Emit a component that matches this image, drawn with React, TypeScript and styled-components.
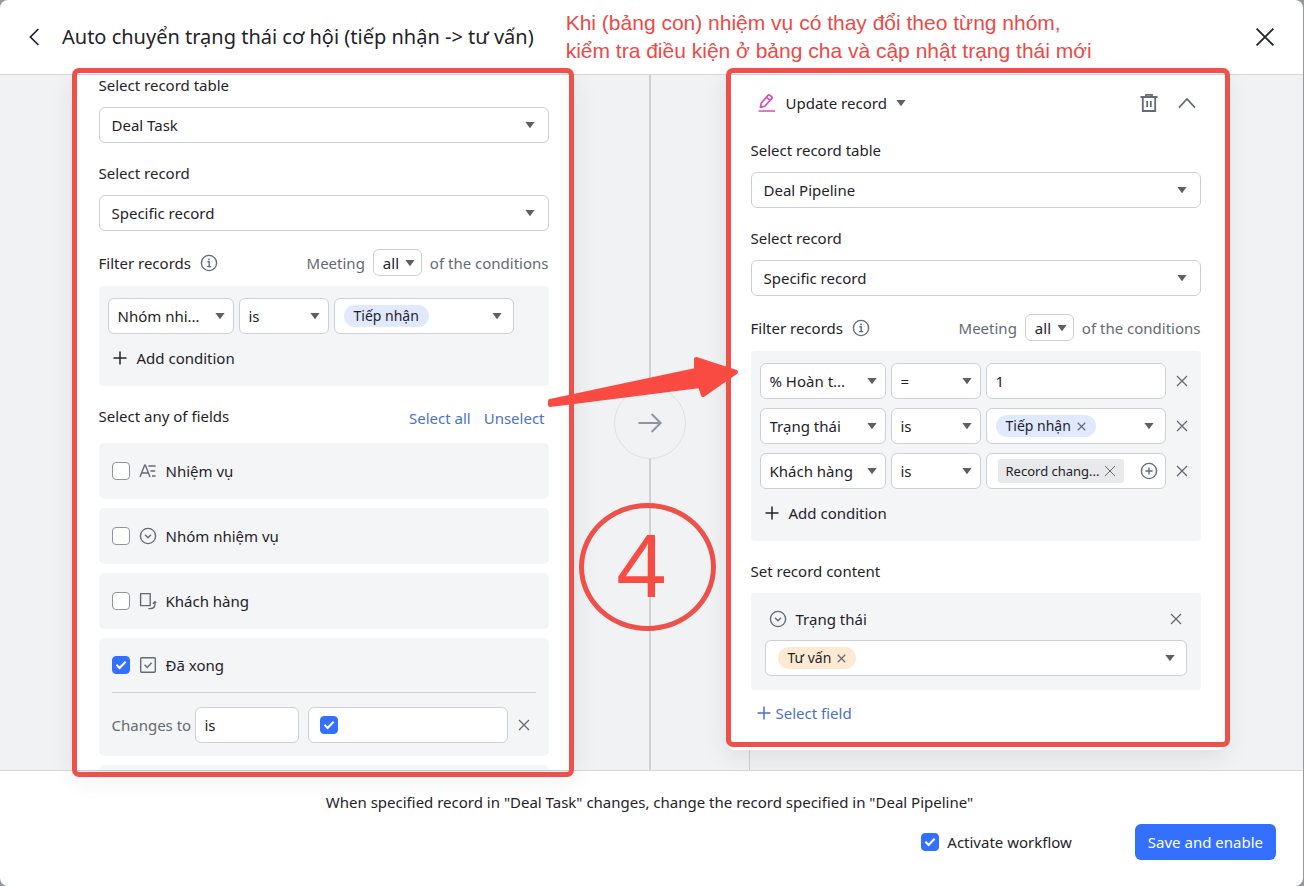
import React, { useState } from "react";
import styled, { createGlobalStyle, css } from "styled-components";

const ink = "#1f2329";
const muted = "#646a73";
const line = "#cdd0d4";
const blue = "#3370ff";
const linkBlue = "#4a72c8";
const red = "#ee504a";
const uiFont = `"Noto Sans", "Open Sans", sans-serif`;

const GlobalStyle = createGlobalStyle`
  *, *::before, *::after { box-sizing: border-box; }
  body { margin: 0; background: #96989c; font-family: ${uiFont}; font-size: 15px; line-height: 20px; color: ${ink}; }
  button, input, select { font: inherit; color: inherit; margin: 0; }
  button { background: none; border: 0; padding: 0; cursor: pointer; }
`;

const Dialog = styled.div`
  height: 100vh;
  min-height: 700px;
  margin-right: 1px;
  display: flex;
  flex-direction: column;
  background: #fff;
  border-radius: 8px;
  overflow: hidden;
`;

const Header = styled.header`
  display: flex;
  align-items: center;
  height: 75px;
  padding: 0 28px 0 24px;
  border-bottom: 1px solid #d5d7da;
`;

const IconButton = styled.button`
  display: inline-flex;
  align-items: center;
  justify-content: center;
  flex: none;
  color: ${muted};
`;

const Title = styled.h1`
  margin: 0 32px 0 18px;
  font-size: 20px;
  line-height: 28px;
  font-weight: 400;
  white-space: nowrap;
`;

const Note = styled.p`
  flex: 1;
  margin: 0;
  color: #e94b48;
  font-family: "Liberation Sans", Arial, sans-serif;
  font-size: 21px;
  line-height: 28px;
  white-space: nowrap;
`;

const Canvas = styled.main`
  flex: 1;
  min-height: 0;
  display: flex;
  justify-content: center;
  padding-right: 4px;
  background: #f1f2f4;
`;

const Column = styled.section`
  position: relative;
  display: flex;
  flex-direction: column;
  width: 498px;
  min-width: 0;
`;

const Card = styled.div<{ $scroll?: boolean }>`
  position: relative;
  background: #fff;
  padding: 0 24px;
  box-shadow: 0 6px 24px rgba(31, 35, 41, 0.1);
  ${(p) =>
    p.$scroll
      ? css`
          flex: 1;
          overflow: hidden;
        `
      : css`
          padding: 16px 24px 25px;
          border-radius: 0 0 8px 8px;
        `}
`;

const BranchTail = styled.div`
  flex: 1;
  margin-left: 22px;
  border-left: 1px solid ${line};
`;

const Frame = styled.div<{ $inset: string }>`
  position: absolute;
  inset: ${(p) => p.$inset};
  z-index: 2;
  border: 5px solid ${red};
  border-radius: 7px;
  pointer-events: none;
`;

const Connector = styled.div`
  position: relative;
  display: flex;
  flex-direction: column;
  align-items: center;
  width: 154px;
`;

const Rail = styled.div`
  flex: 1;
  width: 2px;
  background: #cfd1d4;
`;

const ArrowBubble = styled.div`
  display: flex;
  align-items: center;
  justify-content: center;
  width: 72px;
  height: 72px;
  border: 1px solid #dee0e3;
  border-radius: 50%;
  color: #8f959e;
`;

const ArrowMark = styled.svg`
  position: absolute;
  z-index: 3;
  left: -25px;
  top: calc(50% - 70px);
  pointer-events: none;
`;

const StepMark = styled.div`
  position: absolute;
  left: 6px;
  top: calc(50% + 80px);
  display: flex;
  align-items: center;
  justify-content: center;
  width: 137px;
  height: 128px;
  padding: 0 12px 6px 0;
  border: 5px solid ${red};
  border-radius: 50%;
  color: #f74c43;
  font-size: 86px;
  line-height: 112px;
`;

const Label = styled.label`
  display: block;
  margin-bottom: 12px;
  white-space: nowrap;
`;

const Field = styled.div`
  margin-bottom: 20px;
`;

const SelectShell = styled.span<{ $width?: string; $small?: boolean }>`
  display: inline-grid;
  align-items: center;
  width: ${(p) => p.$width ?? "100%"};
  flex: none;
  select {
    grid-area: 1 / 1;
    appearance: none;
    width: 100%;
    min-width: 0;
    height: ${(p) => (p.$small ? 27 : 36)}px;
    padding: 0 ${(p) => (p.$small ? 20 : 24)}px 0 ${(p) => (p.$small || p.$width ? 9 : 12)}px;
    background: #fff;
    border: 1px solid ${line};
    border-radius: 6px;
    outline: 0;
  }
  svg {
    grid-area: 1 / 1;
    justify-self: end;
    margin-right: ${(p) => (p.$small ? 7 : p.$width ? 9 : 14)}px;
    pointer-events: none;
  }
`;

const FilterHead = styled.div`
  display: flex;
  align-items: center;
  height: 27px;
  margin: -2px 0 10px;
  white-space: nowrap;
`;

const InfoIcon = styled.svg`
  margin-left: 9px;
`;

const Meeting = styled.div`
  display: flex;
  align-items: center;
  gap: 8px;
  margin-left: auto;
  color: ${muted};
  select { color: ${ink}; }
`;

const FilterBox = styled.div`
  padding: 12px 9px 16px;
  margin-bottom: 20px;
  background: #f4f5f6;
  border-radius: 4px;
`;

const Condition = styled.div`
  display: flex;
  align-items: center;
  gap: 5px;
  & + & { margin-top: 9px; }
  > button { margin-left: 5px; }
`;

const ValueBox = styled.div<{ $width?: string }>`
  display: flex;
  align-items: center;
  width: ${(p) => p.$width ?? "100%"};
  height: 36px;
  padding: 0 7px 0 ${(p) => (p.$width ? 9 : 12)}px;
  background: #fff;
  border: 1px solid ${line};
  border-radius: 6px;
  > button:last-child {
    width: 18px;
    margin-left: auto;
  }
`;

const TextInput = styled.input<{ $width: string }>`
  width: ${(p) => p.$width};
  height: 36px;
  padding: 0 9px;
  background: #fff;
  border: 1px solid ${line};
  border-radius: 6px;
  outline: 0;
`;

const Tag = styled.span<{ $bg: string; $square?: boolean }>`
  display: inline-flex;
  align-items: center;
  gap: ${(p) => (p.$square ? 4 : 6)}px;
  height: ${(p) => (p.$square ? 24 : 22)}px;
  padding: 0 ${(p) => (p.$square ? 8 : 10)}px;
  margin-left: ${(p) => (p.$square ? 2 : 0)}px;
  background: ${(p) => p.$bg};
  border-radius: ${(p) => (p.$square ? 3 : 11)}px;
  font-size: ${(p) => (p.$square ? 13 : 14)}px;
  white-space: nowrap;
`;

const AddButton = styled.button<{ $link?: boolean }>`
  display: flex;
  align-items: center;
  gap: ${(p) => (p.$link ? 5 : 10)}px;
  height: 24px;
  margin: ${(p) => (p.$link ? "11px 0 0 6px" : "12px 0 0 5px")};
  color: ${(p) => (p.$link ? linkBlue : ink)};
`;

const FieldsHead = styled.div`
  display: flex;
  justify-content: space-between;
  margin-bottom: 15px;
`;

const LinkGroup = styled.div`
  display: flex;
  gap: 13px;
  padding: 2px 4px 0 0;
  a {
    color: ${linkBlue};
    text-decoration: none;
  }
`;

const FieldCard = styled.div`
  margin-bottom: 9px;
  padding: 0 13px;
  background: #f4f5f6;
  border-radius: 5px;
`;

const FieldLabel = styled.label<{ $open?: boolean }>`
  display: flex;
  align-items: center;
  height: ${(p) => (p.$open ? 54 : 56)}px;
  svg.type { margin: 0 9px; }
`;

const ChangeRow = styled.div`
  display: flex;
  align-items: center;
  height: 64px;
  border-top: 1px solid ${line};
  color: ${muted};
  input { color: ${ink}; }
`;

const ChangeLabel = styled.label`
  width: 83px;
  white-space: nowrap;
`;

const CheckShell = styled.span`
  display: inline-grid;
  flex: none;
  place-items: center;
  input {
    grid-area: 1 / 1;
    appearance: none;
    width: 18px;
    height: 18px;
    background: #fff;
    border: 1px solid #8f959e;
    border-radius: 4px;
  }
  input:checked {
    background: ${blue};
    border-color: ${blue};
  }
  svg {
    grid-area: 1 / 1;
    pointer-events: none;
  }
`;

const ActionHead = styled.div`
  display: flex;
  align-items: center;
  height: 24px;
  margin-bottom: 25px;
  padding: 0 5px 0 6px;
`;

const ActionName = styled.button`
  display: flex;
  align-items: center;
  gap: 9px;
  margin-right: auto;
`;

const ActionTools = styled.div`
  display: flex;
  gap: 20px;
`;

const ContentBox = styled.div`
  padding: 14px;
  background: #f4f5f6;
  border-radius: 4px;
`;

const ContentHead = styled.div`
  display: flex;
  align-items: center;
  gap: 9px;
  height: 24px;
  margin-bottom: 9px;
  padding: 0 5px 0 4px;
  button { margin-left: auto; }
`;

const Footer = styled.footer`
  padding: 21px 27px 26px;
  border-top: 1px solid #d5d7da;
`;

const Summary = styled.p`
  margin: 0 4px 12px 0;
  text-align: center;
`;

const FooterActions = styled.div`
  display: flex;
  align-items: center;
  justify-content: flex-end;
  gap: 63px;
`;

const Activate = styled.label`
  display: flex;
  align-items: center;
  gap: 8px;
`;

const SaveButton = styled.button`
  height: 36px;
  padding: 0 13px;
  background: ${blue};
  border-radius: 6px;
  color: #fff;
  white-space: nowrap;
`;

const stroke = { fill: "none", stroke: "currentColor", strokeWidth: 1.4 } as const;

const Caret = () => (
  <svg width="10" height="8" viewBox="0 0 10 8" aria-hidden="true">
    <path d="M0.4 1h9.2L5 7.2z" fill="#5c6066" />
  </svg>
);

const Cross = ({ size = 12, width = 1.3 }: { size?: number; width?: number }) => (
  <svg width={size} height={size} viewBox="0 0 12 12" aria-hidden="true">
    <path d="M1 1l10 10M11 1L1 11" {...stroke} strokeWidth={width} />
  </svg>
);

const Plus = () => (
  <svg width="14" height="14" viewBox="0 0 14 14" aria-hidden="true">
    <path d="M7 0.5v13M0.5 7h13" {...stroke} strokeWidth={1.5} />
  </svg>
);

const CircleDown = ({ className }: { className?: string }) => (
  <svg className={className} width="18" height="18" viewBox="0 0 18 18" color={muted} aria-hidden="true">
    <circle cx="9" cy="9" r="7.6" {...stroke} />
    <path d="M6 7.8l3 3 3-3" {...stroke} />
  </svg>
);

const TextType = () => (
  <svg className="type" width="18" height="18" viewBox="0 0 18 18" color={muted} aria-hidden="true">
    <path d="M1 15L5.6 3.2h.8l4.6 11.8M2.8 11h6.4M9.4 4h7.2M11.4 9h4.8M13 14h3.6" {...stroke} />
  </svg>
);

const LinkType = () => (
  <svg className="type" width="18" height="18" viewBox="0 0 18 18" color={muted} aria-hidden="true">
    <path d="M1.6 1.6h9.6v12H1.6z" {...stroke} strokeLinejoin="round" />
    <path d="M9.4 16.6h2c2.8 0 4.6-1.8 4.6-4.8v-1.6M13.8 11.8l2.2-2 1.2 1" {...stroke} />
  </svg>
);

const CheckType = () => (
  <svg className="type" width="18" height="18" viewBox="0 0 18 18" color={muted} aria-hidden="true">
    <rect x="1.7" y="1.7" width="14.6" height="14.6" rx="1" {...stroke} />
    <path d="M5.6 8.8l2.6 2.6 4.4-4.6" {...stroke} />
  </svg>
);

const Info = () => (
  <InfoIcon width="18" height="18" viewBox="0 0 18 18" color={muted} aria-hidden="true">
    <circle cx="9" cy="9" r="7.6" {...stroke} />
    <path d="M7.4 7.8h1.8v4.6M7.2 12.6h4" {...stroke} />
    <circle cx="9" cy="5.4" r="0.9" fill="currentColor" />
  </InfoIcon>
);

function Check({ id, label, initial = false }: { id?: string; label?: string; initial?: boolean }) {
  const [on, setOn] = useState(initial);
  return (
    <CheckShell>
      <input id={id} type="checkbox" aria-label={label} checked={on} onChange={() => setOn(!on)} />
      {on && (
        <svg width="12" height="10" viewBox="0 0 12 10" aria-hidden="true">
          <path d="M1.4 4.8l3.2 3.2 6-6.2" fill="none" stroke="#fff" strokeWidth="2" />
        </svg>
      )}
    </CheckShell>
  );
}

function Dropdown(props: { id?: string; label?: string; value: string; width?: string; small?: boolean }) {
  return (
    <SelectShell $width={props.width} $small={props.small}>
      <select id={props.id} aria-label={props.label} defaultValue={props.value}>
        <option>{props.value}</option>
      </select>
      <Caret />
    </SelectShell>
  );
}

function TableFields({ prefix, table }: { prefix: string; table: string }) {
  return (
    <>
      <Field>
        <Label htmlFor={`${prefix}-table`}>Select record table</Label>
        <Dropdown id={`${prefix}-table`} value={table} />
      </Field>
      <Field>
        <Label htmlFor={`${prefix}-record`}>Select record</Label>
        <Dropdown id={`${prefix}-record`} value="Specific record" />
      </Field>
      <FilterHead>
        Filter records
        <Info />
        <Meeting>
          Meeting
          <Dropdown label="Match" value="all" width="49px" small />
          of the conditions
        </Meeting>
      </FilterHead>
    </>
  );
}

function AddCondition() {
  return (
    <AddButton type="button">
      <Plus />
      Add condition
    </AddButton>
  );
}

function ConditionRow({ field, op, removable, children }: { field: string; op: string; removable?: boolean; children: React.ReactNode }) {
  return (
    <Condition>
      <Dropdown label="Field" value={field} width="126px" />
      <Dropdown label="Operator" value={op} width="90px" />
      {children}
      {removable && (
        <IconButton type="button" aria-label="Remove condition">
          <Cross />
        </IconButton>
      )}
    </Condition>
  );
}

function OpenButton() {
  return (
    <IconButton type="button" aria-label="Open options">
      <Caret />
    </IconButton>
  );
}

function RemoveTag({ size = 9 }: { size?: number }) {
  return (
    <IconButton type="button" aria-label="Remove value">
      <Cross size={size} width={size > 10 ? 1 : 1.6} />
    </IconButton>
  );
}

const plainFields = [
  { id: "f-task", name: "Nhiệm vụ", icon: <TextType /> },
  { id: "f-group", name: "Nhóm nhiệm vụ", icon: <CircleDown className="type" /> },
  { id: "f-client", name: "Khách hàng", icon: <LinkType /> },
];

const ChangeValue = styled(ValueBox).attrs({ $width: "200px" })`
  margin: 0 10px 0 9px;
  padding-left: 11px;
`;

function TriggerCard() {
  return (
    <Card $scroll>
      <TableFields prefix="trigger" table="Deal Task" />
      <FilterBox>
        <ConditionRow field="Nhóm nhi..." op="is">
          <ValueBox $width="180px">
            <Tag $bg="#e0e9ff">Tiếp nhận</Tag>
            <OpenButton />
          </ValueBox>
        </ConditionRow>
        <AddCondition />
      </FilterBox>
      <FieldsHead>
        <span>Select any of fields</span>
        <LinkGroup>
          <a href="#all">Select all</a>
          <a href="#none">Unselect</a>
        </LinkGroup>
      </FieldsHead>
      {plainFields.map((f) => (
        <FieldCard key={f.id}>
          <FieldLabel htmlFor={f.id}>
            <Check id={f.id} />
            {f.icon}
            {f.name}
          </FieldLabel>
        </FieldCard>
      ))}
      <FieldCard>
        <FieldLabel htmlFor="f-done" $open>
          <Check id="f-done" initial />
          <CheckType />
          Đã xong
        </FieldLabel>
        <ChangeRow>
          <ChangeLabel htmlFor="change-op">Changes to</ChangeLabel>
          <TextInput id="change-op" $width="104px" defaultValue="is" />
          <ChangeValue>
            <Check label="Đã xong value" initial />
          </ChangeValue>
          <IconButton type="button" aria-label="Remove change">
            <Cross />
          </IconButton>
        </ChangeRow>
      </FieldCard>
      <FieldCard>
        <FieldLabel as="div" />
      </FieldCard>
    </Card>
  );
}

function ActionCard() {
  return (
    <Card>
      <ActionHead>
        <ActionName type="button">
          <svg width="20" height="20" viewBox="0 0 20 20" color="#d64fb0" aria-hidden="true">
            <path d="M3.4 14.4l.8-4.2L11 2.4q.9-.9 1.9-.1l1.7 1.4q1 .9.1 1.9L7.8 13.2zM9.8 4.6l3.4 2.8M1.6 18h16.6" {...stroke} strokeWidth={1.7} strokeLinejoin="round" />
          </svg>
          Update record
          <Caret />
        </ActionName>
        <ActionTools>
          <IconButton type="button" aria-label="Delete step">
            <svg width="18" height="20" viewBox="0 0 18 20" aria-hidden="true">
              <path d="M0.5 4h17M6 3.6V1.8h6v1.8M2.8 4v14h12.4V4M7.2 8v6M10.8 8v6" {...stroke} strokeWidth={1.8} />
            </svg>
          </IconButton>
          <IconButton type="button" aria-label="Collapse step">
            <svg width="18" height="12" viewBox="0 0 18 12" aria-hidden="true">
              <path d="M1 10.6l8-8.6 8 8.6" {...stroke} strokeWidth={1.7} />
            </svg>
          </IconButton>
        </ActionTools>
      </ActionHead>
      <TableFields prefix="action" table="Deal Pipeline" />
      <FilterBox>
        <ConditionRow field="% Hoàn t..." op="=" removable>
          <TextInput $width="180px" aria-label="Value" defaultValue="1" />
        </ConditionRow>
        <ConditionRow field="Trạng thái" op="is" removable>
          <ValueBox $width="180px">
            <Tag $bg="#e0e9ff">
              Tiếp nhận
              <RemoveTag />
            </Tag>
            <OpenButton />
          </ValueBox>
        </ConditionRow>
        <ConditionRow field="Khách hàng" op="is" removable>
          <ValueBox $width="180px">
            <Tag $bg="#e8e9ea" $square>
              Record chang...
              <RemoveTag size={12} />
            </Tag>
            <IconButton type="button" aria-label="Add reference">
              <svg width="18" height="18" viewBox="0 0 18 18" aria-hidden="true">
                <circle cx="9" cy="9" r="7.6" {...stroke} />
                <path d="M9 5.4v7.2M5.4 9h7.2" {...stroke} />
              </svg>
            </IconButton>
          </ValueBox>
        </ConditionRow>
        <AddCondition />
      </FilterBox>
      <Label as="div">Set record content</Label>
      <ContentBox>
        <ContentHead>
          <CircleDown />
          Trạng thái
          <IconButton type="button" aria-label="Remove field">
            <Cross />
          </IconButton>
        </ContentHead>
        <ValueBox>
          <Tag $bg="#feead2">
            Tư vấn
            <RemoveTag />
          </Tag>
          <OpenButton />
        </ValueBox>
      </ContentBox>
      <AddButton type="button" $link>
        <Plus />
        Select field
      </AddButton>
      <Frame $inset="-7px -5px 3px -1px" />
    </Card>
  );
}

export default function App() {
  return (
    <>
      <GlobalStyle />
      <Dialog>
        <Header>
          <IconButton type="button" aria-label="Back">
            <svg width="20" height="20" viewBox="0 0 20 20" color={ink} aria-hidden="true">
              <path d="M14.4 2L6.4 10l8 8" {...stroke} strokeWidth={1.7} />
            </svg>
          </IconButton>
          <Title>Auto chuyển trạng thái cơ hội (tiếp nhận -&gt; tư vấn)</Title>
          <Note>
            Khi (bảng con) nhiệm vụ có thay đổi theo từng nhóm,
            <br />
            kiểm tra điều kiện ở bảng cha và cập nhật trạng thái mới
          </Note>
          <IconButton type="button" aria-label="Close">
            <svg width="20" height="20" viewBox="0 0 20 20" color={ink} aria-hidden="true">
              <path d="M1.6 1.6l16.8 16.8M18.4 1.6L1.6 18.4" {...stroke} strokeWidth={1.8} />
            </svg>
          </IconButton>
        </Header>
        <Canvas>
          <Column>
            <TriggerCard />
            <Frame $inset="-7px -1px -7px -3px" />
          </Column>
          <Connector>
            <Rail />
            <ArrowBubble>
              <svg width="26" height="22" viewBox="0 0 26 22" aria-hidden="true">
                <path d="M1.5 11h22M14.6 2l9 9-9 9" {...stroke} strokeWidth={2} />
              </svg>
            </ArrowBubble>
            <Rail />
            <StepMark>4</StepMark>
            <ArrowMark width="192" height="56" viewBox="0 0 192 56" aria-hidden="true">
              <path
                d="M2 48L148 17V6L188 19L155 42L152 33L2 52z"
                fill="#fa4b43"
                stroke="#fa4b43"
                strokeWidth="4"
                strokeLinejoin="round"
              />
            </ArrowMark>
          </Connector>
          <Column>
            <ActionCard />
            <BranchTail />
          </Column>
        </Canvas>
        <Footer>
          <Summary>When specified record in "Deal Task" changes, change the record specified in "Deal Pipeline"</Summary>
          <FooterActions>
            <Activate htmlFor="activate">
              <Check id="activate" initial />
              Activate workflow
            </Activate>
            <SaveButton type="button">Save and enable</SaveButton>
          </FooterActions>
        </Footer>
      </Dialog>
    </>
  );
}
